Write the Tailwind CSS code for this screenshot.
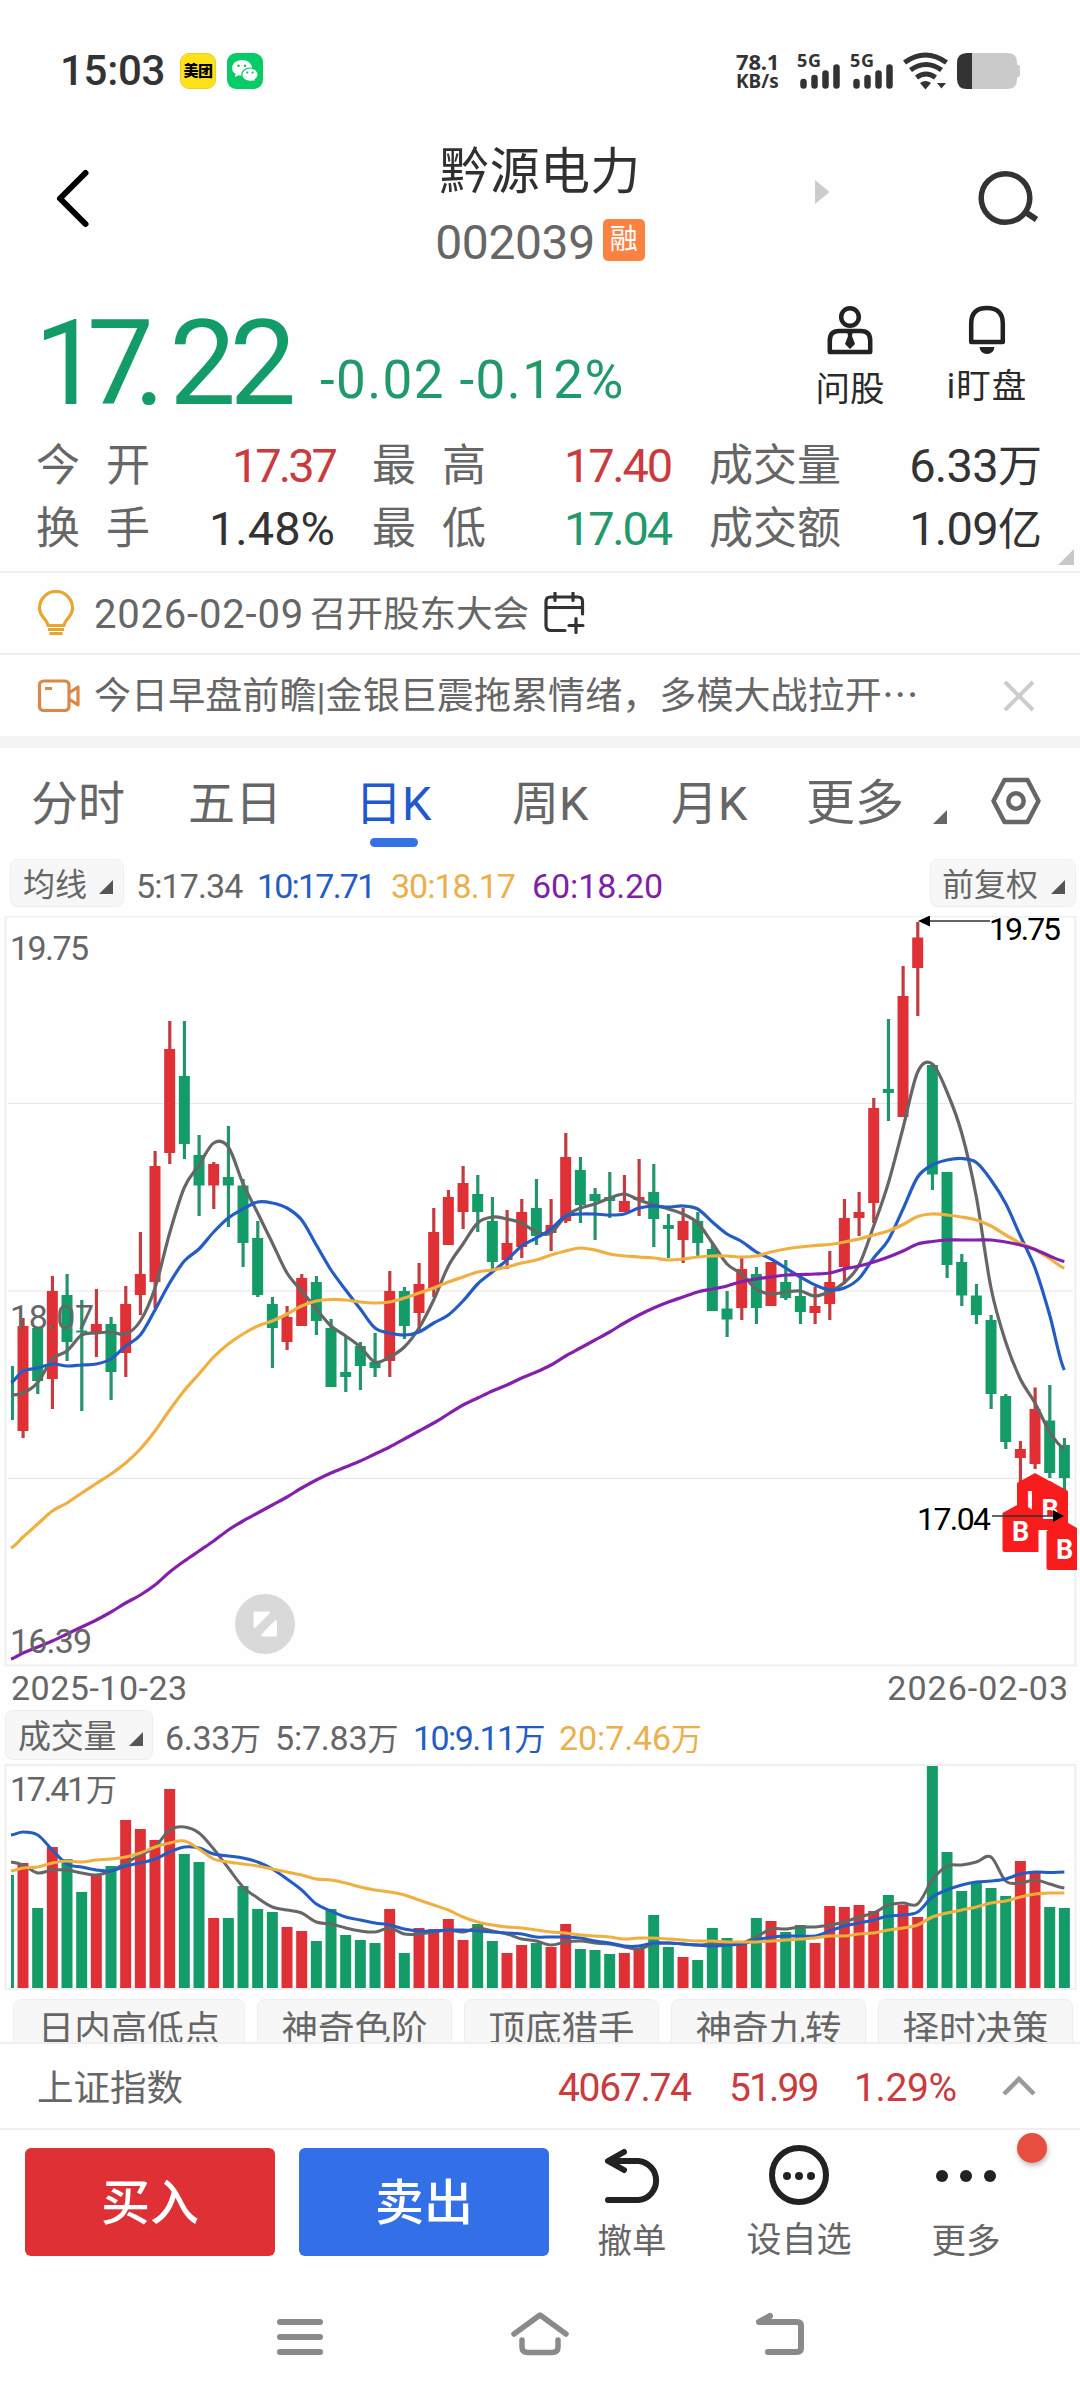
<!DOCTYPE html>
<html lang="zh-CN">
<head>
<meta charset="utf-8">
<title>黔源电力 002039</title>
<script src="https://cdn.jsdelivr.net/npm/@tailwindcss/browser@4"></script>
</head>
<body class="bg-[#fefefe]">
<div class="w-[1080px] h-[2400px] overflow-hidden flex flex-col bg-[#fefefe] text-[#333] whitespace-nowrap font-[Roboto,'Noto_Sans_CJK_SC',sans-serif]">

  <!-- status bar -->
  <div class="h-[142px] shrink-0 flex items-center pl-[60px] pr-[59px]">
    <div class="w-[120px] text-[42px] leading-[42px] font-medium tracking-[-0.3px] text-[#333]">15:03</div>
    <div class="size-[36px] rounded-[9px] bg-[#ffe11a] border border-[#e8cf2a] flex items-center justify-center text-[15px] leading-none font-black text-black tracking-[-0.5px]">美团</div>
    <div class="ml-[11px] size-[36px] rounded-[9px] bg-[#06cb67] flex items-center justify-center">
      <svg width="28" height="24" viewBox="0 0 28 24">
        <path d="M11 1C5.500 1 1 4.600 1 9c0 2.500 1.400 4.600 3.600 6L4 18l3.500-1.800c1.100.3 2.300.5 3.500.5 5.500 0 10-3.500 10-7.900S16.500 1 11 1z" fill="#fff"/>
        <path d="M19 9c-4.600 0-8.200 3-8.200 6.700s3.600 6.700 8.200 6.700c1 0 1.900-.1 2.700-.4L24.500 23l-.6-2.300c2-1.200 3.300-3 3.300-5C27.200 12 23.600 9 19 9z" fill="#fff" stroke="#06cb67" stroke-width="1.200"/>
        <g fill="#06cb67"><circle cx="7.500" cy="6.800" r="1.300"/><circle cx="14" cy="6.800" r="1.300"/><circle cx="16.300" cy="13.600" r="1.100"/><circle cx="21.600" cy="13.600" r="1.100"/></g>
      </svg>
    </div>
    <div class="ml-auto w-[60px] font-[Noto_Sans,sans-serif] font-bold text-[#333] leading-[22px]">
      <div class="text-[22px] tracking-[-0.2px]">78.1</div><div class="text-[19px] -mt-[2px]">KB/s</div>
    </div>
    <svg class="overflow-visible" width="225" height="38" viewBox="796 52 225 38">
      <g fill="#333" font-family="Noto Sans" font-weight="700" font-size="18">
        <text x="797" y="66.500" textLength="24">5G</text><text x="850" y="66.500" textLength="24">5G</text>
      </g>
      <g stroke="#333" stroke-width="6.500" stroke-linecap="round">
        <path d="M803.500 82v3.500M814.500 78v7.500M825.500 73.500V85.500M836.500 67.500V85.500M856.500 82v3.500M867.500 78v7.500M878.500 73.500V85.500M889.500 67.500V85.500"/>
      </g>
      <g fill="none" stroke="#333" stroke-width="5">
        <path d="M904.500 62.500q21-15 42 0M910.500 70q15.500-11 31 0M916.500 77.500q9.500-7 19 0"/>
      </g>
      <path d="M920 83q5.500-4 11 0l-5.500 6.500zM937 83h9l-4.500 5.500z" fill="#333"/>
      <path d="M966 53h41q10 0 10 9v2.500q3 0 3 3v7q0 3-3 3V80q0 9-10 9h-41z" fill="#cacaca"/>
      <path d="M972 53v36h-5q-10 0-10-10V63q0-10 10-10z" fill="#333"/>
    </svg>
  </div>

  <!-- title bar -->
  <header class="h-[148px] shrink-0 grid grid-cols-[340px_400px_340px]">
    <svg class="ml-[51px] mt-[24px]" width="44" height="66" viewBox="0 0 44 66"><path d="M34.500 7 9 32.500 34.500 58" fill="none" stroke="#000" stroke-width="6" stroke-linecap="round" stroke-linejoin="round"/></svg>
    <div class="flex flex-col items-center">
      <h1 class="mt-[3px] text-[50px] leading-[54px] tracking-[0.3px] text-[#303030]">黔源电力</h1>
      <div class="mt-[17px] flex items-center h-[54px] text-[#666]">
        <span class="text-[48px] leading-[54px] tracking-[-0.4px]">002039</span>
        <span class="ml-[8px] -mt-[6px] size-[42px] rounded-[5px] bg-[#fc8244] text-white text-[28px] leading-[42px] text-center">融</span>
      </div>
    </div>
    <div class="flex">
      <svg class="ml-[75px] mt-[38px]" width="15" height="24" viewBox="0 0 15 24"><path d="M0 0 14.500 12 0 24z" fill="#ccc"/></svg>
      <svg class="ml-[146px] mt-[26px]" width="66" height="62" viewBox="0 0 66 62"><circle cx="29.500" cy="30" r="24.300" fill="none" stroke="#333" stroke-width="5.500"/><path d="M50 44.500 60.500 51.500" stroke="#333" stroke-width="6"/></svg>
    </div>
  </header>

  <!-- quote -->
  <section class="h-[283px] shrink-0 border-b-2 border-[#efefef]">
    <div class="h-[144px] flex">
      <div class="w-[313px] pl-[34px] pt-[14px] text-[119px] leading-[120px] text-[#149c68]"><span class="tracking-[-14px]">1</span><span class="tracking-[-20px]">7</span><span class="tracking-[4px]">.</span><span class="tracking-[-6.5px]">22</span></div>
      <div class="w-[494px] pl-[7px] pt-[60px] text-[53px] leading-[60px] tracking-[1.4px] text-[#219a6b]">-0.02 -0.12%</div>
      <div class="w-[86px] flex flex-col items-center">
        <svg class="mt-[15px]" width="48" height="50" viewBox="0 0 48 50"><g fill="none" stroke="#222" stroke-width="4.500"><circle cx="24" cy="12" r="8.800"/><path d="M3.800 47V35.500Q3.800 26 13 26H35Q44.200 26 44.200 35.500V47Z" stroke-linejoin="round"/></g><path d="M21 26h6l-1 5 3 8-5 5-5-5 3-8z" fill="#222"/></svg>
        <div class="mt-[14px] text-[34.500px] leading-[40px] text-[#2a2a2a]">问股</div>
      </div>
      <div class="ml-[47px] w-[94px] flex flex-col items-center">
        <svg class="mt-[15px]" width="48" height="50" viewBox="0 0 48 50"><path d="M8.200 37V18.500Q8.200 3 24 3T39.800 18.500V37Z" fill="none" stroke="#222" stroke-width="4.500" stroke-linejoin="round"/><path d="M16.500 42h15q-1 7-7.500 7t-7.500-7z" fill="#222"/></svg>
        <div class="mt-[11px] text-[34.500px] leading-[40px] tracking-[1px] text-[#2a2a2a]">i盯盘</div>
      </div>
    </div>
    <div class="relative grid grid-cols-[111px_188px_149px_187px_172px_199px] pt-[1px] pl-[36px] text-[44px] leading-[62px] text-[#666]">
      <div>今<span class="inline-block w-[26px]"></span>开</div><div class="text-right text-[47px] tracking-[-3px] text-[#cb3a3c]">17.37</div>
      <div class="pl-[37px]">最<span class="inline-block w-[26px]"></span>高</div><div class="text-right text-[47px] tracking-[-2.200px] text-[#cb3a3c]">17.40</div>
      <div class="pl-[38px]">成交量</div><div class="text-right text-[#333]"><span class="text-[47px] tracking-[-0.700px]">6.33</span>万</div>
      <div>换<span class="inline-block w-[26px]"></span>手</div><div class="pl-[2px] text-right text-[47px] text-[#333]">1.48%</div>
      <div class="pl-[37px]">最<span class="inline-block w-[26px]"></span>低</div><div class="text-right text-[47px] tracking-[-2.200px] text-[#219a6b]">17.04</div>
      <div class="pl-[38px]">成交额</div><div class="text-right text-[#333]"><span class="text-[47px] tracking-[-0.700px]">1.09</span>亿</div>
      <svg class="absolute right-[6px] top-[115px]" width="16" height="16" viewBox="0 0 16 16"><path d="M16 0v16H0z" fill="#c8c8c8"/></svg>
    </div>
  </section>

  <!-- notices -->
  <div class="h-[82px] shrink-0 border-b-2 border-[#efefef] flex items-center pl-[36px] text-[#666]">
    <svg width="42" height="46" viewBox="0 0 42 46"><path d="M12 35.500C12 30 3.500 27 3.500 18a16.500 16.500 0 0 1 33 0C36.500 27 28 30 28 35.500z" fill="none" stroke="#e8a62c" stroke-width="3.200" stroke-linejoin="round"/><path d="M12 39.500h16M13.500 43.500h13" stroke="#e8a62c" stroke-width="3"/></svg>
    <div class="ml-[16px] pt-[3px] text-[40px] leading-[60px] tracking-[0.800px]">2026-02-09</div>
    <div class="ml-[6px] pt-[4px] text-[36.500px] leading-[60px]">召开股东大会</div>
    <svg class="ml-[15px]" width="42" height="42" viewBox="0 0 42 42"><path d="M38.500 22V9.500q0-4.500-4.500-4.500H6.500Q2 5 2 9.500v24q0 5 5 5H21M2 15.500H38.500M11 1v7.500M29 1v7.500M32 26.500v14M25 33.500h14" fill="none" stroke="#333" stroke-width="3.200" stroke-linecap="round"/></svg>
  </div>
  <div class="h-[81px] shrink-0 flex items-center pl-[37px] text-[#666]">
    <svg width="44" height="34" viewBox="0 0 44 34"><g fill="none" stroke="#db8748" stroke-width="3.200" stroke-linejoin="round"><rect x="2.500" y="2" width="29.500" height="29.500" rx="4"/><path d="m32 14 9-6v18l-9-6M8 9.500h7"/></g></svg>
    <div class="ml-[13px] pt-[3px] w-[908px] text-[37px] leading-[60px] tracking-[0.080px]">今日早盘前瞻|金银巨震拖累情绪，多模大战拉开⋯</div>
    <svg width="34" height="34" viewBox="0 0 34 34"><path d="M3 3 31 31M31 3 3 31" stroke="#ccc" stroke-width="4"/></svg>
  </div>
  <div class="h-[12px] shrink-0 bg-[#f4f4f4]"></div>

  <!-- period tabs -->
  <nav class="h-[111px] shrink-0 flex pl-[31px] pt-[26px] text-[47px] leading-[60px] text-[#666]">
    <div class="w-[157px]">分时</div>
    <div class="w-[167px]">五日</div>
    <div class="w-[157px] text-[#1f58cf]"><div>日K</div><div class="ml-[15px] mt-[4px] w-[48px] h-[9px] rounded-full bg-[#3670e5]"></div></div>
    <div class="w-[159px]">周K</div>
    <div class="w-[135px]">月K</div>
    <div class="w-[127px] text-[49px]">更多</div>
    <svg class="mt-[36px]" width="14" height="14" viewBox="0 0 14 14"><path d="M14 0v14H0z" fill="#666"/></svg>
    <svg class="ml-[43px] mt-[3px]" width="52" height="48" viewBox="0 0 52 48"><path d="M14.500 3H37.500L48.500 24 37.500 45H14.500L3.500 24Z" fill="none" stroke="#666" stroke-width="4.500" stroke-linejoin="round"/><circle cx="26" cy="24" r="7.700" fill="none" stroke="#666" stroke-width="4.500"/></svg>
  </nav>

  <!-- moving-average legend -->
  <div class="h-[57px] shrink-0 flex text-[34px] leading-[48px] text-[#666] pl-[10px]">
    <div class="w-[114px] h-[48px] rounded-[8px] bg-[#f7f7f7] border border-[#eee] flex items-center pl-[12px] text-[32px]"><span class="pt-[4px]">均线</span><svg class="ml-[12px] mt-[8px]" width="14" height="14" viewBox="0 0 14 14"><path d="M14 0v14H0z" fill="#555"/></svg></div>
    <div class="pl-[12px] w-[133px] pt-[3px] tracking-[-0.900px]">5:17.34</div>
    <div class="w-[134px] pt-[3px] tracking-[-1.800px] text-[#235dc4]">10:17.71</div>
    <div class="w-[141px] pt-[3px] tracking-[-1.000px] text-[#ecb04a]">30:18.17</div>
    <div class="pt-[3px] tracking-[-0.1px] text-[#7f1fa8]">60:18.20</div>
    <div class="ml-auto mr-[4px] w-[146px] h-[48px] rounded-[8px] bg-[#f7f7f7] border border-[#eee] flex items-center pl-[11px] text-[32px]"><span class="pt-[4px]">前复权</span><svg class="ml-[13px] mt-[8px]" width="14" height="14" viewBox="0 0 14 14"><path d="M14 0v14H0z" fill="#555"/></svg></div>
  </div>

  <!-- candlestick chart -->
  <svg class="block shrink-0" width="1080" height="751" viewBox="0 916 1080 751">
    <rect x="5.500" y="916.500" width="1070" height="749" fill="none" stroke="#efefef" stroke-width="2"/>
    <path d="M8 1103.500H1073M8 1291H1073M8 1478.500H1073" stroke="#e6e6e6" stroke-width="1.200"/>
    <g id="candles"></g>
    <g id="averages" fill="none" stroke-width="3.200"></g>
    <g font-size="34" fill="#666">
      <text x="10" y="959.500" textLength="79">19.75</text>
      <text x="10" y="1328.500" textLength="84">18.07</text>
      <text x="10" y="1653" textLength="82">16.39</text>
    </g>
    <g id="buys"></g>
    <g fill="#000" font-size="32">
      <text x="989" y="939.500" textLength="72">19.75</text>
      <text x="917" y="1530" textLength="74">17.04</text>
      <path d="M930 921H990M992 1516H1060" stroke="#333" stroke-width="1.600"/>
      <path d="M918 921 930 915.500V926.500zM1064 1516 1053 1510V1522z"/>
    </g>
    <circle cx="265" cy="1624" r="30" fill="#d9d9d9"/>
    <path d="M254 1612h14.500q2 0 .6 1.500L255.500 1627q-1.500 1.500-1.500-.5zM276.500 1636H262.500q-2 0-.6-1.500L275 1621q1.500-1.500 1.500.5z" fill="#fff" stroke="#fff" stroke-width="1"/>
  </svg>
  <div class="h-[43px] shrink-0 flex justify-between pl-[11px] pr-[11px] text-[34px] leading-[43px] text-[#666]"><span class="tracking-[0.500px]">2025-10-23</span><span class="tracking-[1.000px]">2026-02-03</span></div>

  <!-- volume legend -->
  <div class="h-[54px] shrink-0 flex pl-[5px] text-[34px] leading-[50px] text-[#666]">
    <div class="w-[148px] h-[50px] rounded-[8px] bg-[#f7f7f7] border border-[#eee] flex items-center pl-[12px] text-[33px] tracking-[-0.300px]"><span class="pt-[4px]">成交量</span><svg class="ml-[13px] mt-[8px]" width="14" height="14" viewBox="0 0 14 14"><path d="M14 0v14H0z" fill="#555"/></svg></div>
    <div class="pl-[12px] pt-[3px] w-[122px] tracking-[-0.300px]">6.33<span class="text-[31px]">万</span></div>
    <div class="w-[138px] pt-[3px] tracking-[-0.200px]">5:7.83<span class="text-[31px]">万</span></div>
    <div class="w-[146px] pt-[3px] tracking-[-1.600px] text-[#235dc4]">10:9.11<span class="text-[31px]">万</span></div>
    <div class="pt-[3px] tracking-[-0.100px] text-[#ecb04a]">20:7.46<span class="text-[31px]">万</span></div>
  </div>

  <!-- volume chart -->
  <svg class="block shrink-0" width="1080" height="228" viewBox="0 1764 1080 228">
    <rect x="5.500" y="1765" width="1070" height="224" fill="none" stroke="#efefef" stroke-width="2"/>
    <g id="volumes"></g>
    <g id="volumeAverages" fill="none" stroke-width="3"></g>
    <g fill="#666"><text x="10" y="1801" font-size="34" textLength="76">17.41</text><text x="86" y="1801" font-size="31">万</text></g>
  </svg>

  <!-- indicator chips, cut off by the index bar -->
  <div class="h-[50px] shrink-0 overflow-hidden flex gap-[12px] pl-[13px] pt-[7px] text-[36.500px] leading-[60px] text-[#666] text-center">
    <div class="w-[232px] h-[70px] shrink-0 rounded-[8px] bg-[#f7f7f7] border border-[#eee]">日内高低点</div>
    <div class="w-[195px] h-[70px] shrink-0 rounded-[8px] bg-[#f7f7f7] border border-[#eee]">神奇色阶</div>
    <div class="w-[195px] h-[70px] shrink-0 rounded-[8px] bg-[#f7f7f7] border border-[#eee]">顶底猎手</div>
    <div class="w-[195px] h-[70px] shrink-0 rounded-[8px] bg-[#f7f7f7] border border-[#eee]">神奇九转</div>
    <div class="w-[195px] h-[70px] shrink-0 rounded-[8px] bg-[#f7f7f7] border border-[#eee]">择时决策</div>
  </div>

  <!-- index bar -->
  <div class="h-[88px] shrink-0 border-y-2 border-[#efefef] flex items-center pl-[37px] text-[#cb3a3c] text-[39px] leading-[60px]">
    <div class="w-[521px] pt-[6px] text-[36.500px] text-[#666]">上证指数</div>
    <div class="w-[171px] pt-[4px] tracking-[-1.300px]">4067.74</div>
    <div class="w-[125px] pt-[4px] tracking-[-1.900px]">51.99</div>
    <div class="w-[147px] pt-[4px] tracking-[-0.4px]">1.29%</div>
    <svg width="36" height="22" viewBox="0 0 36 22"><path d="M3 19 18 4 33 19" fill="none" stroke="#999" stroke-width="4.500"/></svg>
  </div>

  <!-- actions -->
  <div class="relative h-[150px] shrink-0 flex pl-[25px] pt-[18px] text-[34px] leading-[40px] text-[#666]">
    <button class="w-[250px] h-[108px] rounded-[6px] bg-[#df3135] text-white text-[49px] leading-[112px] font-medium">买入</button>
    <button class="ml-[24px] w-[250px] h-[108px] rounded-[6px] bg-[#3370e7] text-white text-[49px] leading-[112px] font-medium">卖出</button>
    <div class="ml-[42px] w-[82px] flex flex-col items-center">
      <svg class="ml-[3px]" width="60" height="56" viewBox="604 2147 60 56"><path d="M608 2199H638.500A19.600 19.600 0 0 0 638.500 2160H609M624 2151 608 2160 624 2169" fill="none" stroke="#222" stroke-width="6" stroke-linecap="round" stroke-linejoin="round"/></svg>
      <div class="mt-[17px] text-[34.500px]">撤单</div>
    </div>
    <div class="ml-[66px] w-[120px] flex flex-col items-center -mt-[3px]">
      <svg width="60" height="60" viewBox="0 0 60 60"><circle cx="30" cy="30" r="27" fill="none" stroke="#222" stroke-width="6"/><g fill="#222"><circle cx="18" cy="31" r="4"/><circle cx="30" cy="31" r="4"/><circle cx="42" cy="31" r="4"/></g></svg>
      <div class="mt-[16px] text-[35px]">设自选</div>
    </div>
    <div class="ml-[62px] w-[90px] flex flex-col items-center">
      <svg width="60" height="56" viewBox="0 0 60 56"><g fill="#222"><circle cx="6" cy="28" r="6"/><circle cx="30" cy="28" r="6"/><circle cx="54" cy="28" r="6"/></g></svg>
      <div class="mt-[17px] text-[34.500px]">更多</div>
    </div>
    <div class="absolute left-[1017px] top-[3px] size-[30px] rounded-full bg-[#e84e40] shadow-[1px_3px_5px_rgba(0,0,0,0.25)]"></div>
  </div>

  <!-- system navigation -->
  <svg class="block shrink-0" width="1080" height="120" viewBox="0 2280 1080 120">
    <g fill="none" stroke="#8a8a8a" stroke-width="6" stroke-linecap="round" stroke-linejoin="round">
      <path d="M280 2322H320M280 2337H320M280 2352H320"/>
      <path stroke-width="5.500" d="M514 2334 540 2315 566 2334M522 2340V2347Q522 2352.500 528 2352.500H552Q558 2352.500 558 2347V2340"/>
      <path d="M770 2316 759 2322H797Q801 2322 801 2326V2348Q801 2352 797 2352H768"/>
    </g>
  </svg>
</div>

<script>
// One entry per trading day: [body top, body bottom, wick top, wick bottom, volume top, rising]
const days = [
[1366,1420,1366,1420,1875,0],[1326,1431,1318,1438,1863,1],[1328,1381,1328,1394,1908,0],[1291,1379,1276,1409,1847,1],[1295,1342,1274,1361,1859,0],
[1330.5,1332.5,1300,1411,1892,0],[1324,1333,1289,1357,1876,1],[1324,1372,1317,1400,1866,0],[1304,1353,1286,1377,1820,1],[1274,1295,1232,1315,1829,1],
[1166,1282,1151,1308,1840,1],[1049,1153,1021,1164,1789,1],[1076,1144,1021,1159,1854,0],[1155,1185.5,1135,1216,1862,0],[1164,1185.5,1162,1209,1918,1],
[1177,1185.5,1126,1227,1918,0],[1185.5,1243,1179,1267,1886,0],[1238,1295,1221,1297,1909,0],[1304,1328,1297,1368,1912,0],[1317,1342,1306,1350,1927,1],
[1278,1326,1274,1326,1931,1],[1282,1321,1276,1335,1941,0],[1328,1387,1319,1387,1909,0],[1372,1377,1337,1392,1935,0],[1346,1366,1342,1390,1940,0],
[1362,1368,1333,1377,1943,0],[1291,1361,1271,1377,1909,1],[1291,1326,1287,1339,1953,0],[1284,1313,1263,1330,1928,1],[1232,1289,1208,1297,1929,1],
[1197,1245,1190,1245,1919,1],[1183,1212,1166,1229,1940,1],[1194,1212,1175,1232,1924,0],[1221,1262,1197,1270,1941,0],[1243,1260,1210,1269,1953,1],
[1212,1247,1199,1258,1945,1],[1208,1236,1179,1245,1943,0],[1225,1233,1199,1251,1947,1],[1157,1221,1133,1223,1924,1],[1170,1205,1157,1223,1949,0],
[1194,1201,1188,1240,1950,0],[1197,1201,1172,1218,1954,0],[1201,1212,1175,1212,1953,1],[1197,1200,1159,1216,1949,1],[1192,1219,1164,1247,1915,0],
[1225,1229,1214,1258,1947,0],[1221,1240,1208,1263,1957,1],[1221,1243,1212,1256,1960,0],[1249,1311,1243,1311,1928,0],[1308.5,1319.5,1291,1337,1938,0],
[1269,1308,1258,1320,1943,1],[1274,1308,1267,1324,1918,0],[1262,1306,1262,1306,1921,1],[1282,1298,1260,1300,1932,0],[1296,1312,1274,1324,1925,0],
[1306,1313,1287,1324,1943,1],[1282,1304,1251,1320,1906,1],[1218,1267,1199,1284,1907,1],[1212,1218,1192,1236,1905,1],[1108,1203,1098,1223,1911,1],
[1089,1093,1019,1121,1895,0],[996,1117,966,1117,1905,1],[937.5,968,922,1016,1917,1],[1065,1174.5,1065,1190,1766,0],[1172,1265,1172,1278,1852,0],
[1262,1295.5,1254,1306,1891,0],[1295.5,1315,1284,1324,1882,0],[1320,1394,1315,1409,1888,0],[1396,1442,1394,1449,1896,0],[1449,1458,1441,1485,1861,1],
[1409,1464,1387.5,1469,1873,1],[1420.5,1473,1385,1478,1907,0],[1445,1478,1438,1512,1908,0]];
const priceLines = {
"#666666":[1395,1393,1382.5,1359,1351,1335,1333,1332,1334,1321,1288,1233,1187.5,1165,1143,1147,1183.5,1213,1243,1273,1291,1309,1326,1336,1347,1362,1357,1347,1328,1300,1266,1244,1223,1217,1219,1223,1232,1233,1216,1208,1204,1198,1194,1200,1205,1209,1214,1223,1243,1264,1274,1289,1294,1292,1291,1296,1291.5,1282.5,1265,1226,1183,1128,1072,1064,1092,1133,1197,1288,1342,1379,1403,1432,1449],
"#235dc4":[1382.5,1371,1368,1364,1366,1365,1364,1359,1346,1335,1310,1283,1261,1249,1232,1218,1209,1202,1203,1208,1220,1245,1270,1290,1309,1328,1333,1335,1332,1323,1315,1301,1284,1272,1260,1246,1238,1229,1216,1214,1214,1215,1214,1208,1206,1207,1206,1209,1222,1234,1241.5,1252,1259,1268,1277,1285,1290,1288,1278.5,1258,1240,1209,1177,1165,1160,1158.5,1162.5,1180,1203.5,1236,1268,1315,1370],
"#f0b040":[1548,1537,1524,1511,1503,1493,1483.5,1474,1463,1449,1431,1410,1390.5,1374,1357,1344,1334,1326,1321,1314,1306,1301,1299.5,1300,1302,1303,1302,1298,1293,1288,1282,1277,1272,1270,1267,1263,1260,1255,1251,1248,1250,1254,1256,1257,1258,1260,1259,1257,1256,1256,1257,1256,1252,1249,1247,1245.5,1244.5,1242,1239,1235,1231,1224.5,1216.5,1214,1215,1217,1220,1226,1235,1243,1249.5,1258.5,1268],
"#8321ad":[1659,1653,1647,1641,1634,1627,1620,1612,1603,1595,1585,1572,1561,1551,1541,1530,1521,1513,1505,1497,1488,1480,1473,1467,1461,1454,1447,1439,1431,1423,1414,1405,1398,1391,1385,1378,1372,1365,1356,1348,1340,1332,1323,1315,1308,1302,1297,1292,1289,1286,1281.5,1279,1277,1275,1274.5,1274,1273,1269,1266,1262,1257,1251,1244,1241.5,1240,1240,1240,1240,1242,1245,1249.5,1256,1261.5]};
const volumeLines = {
"#666666":[1862,1865,1873,1870,1870,1873,1875,1871,1863,1855,1847,1830,1827,1833,1849,1868,1887,1898,1907,1910,1913,1922,1924,1928,1931,1932,1928,1934,1934,1932,1930,1932,1928,1931,1934,1939,1941,1945,1942,1941,1943,1944,1947,1949,1944,1943,1944,1945,1944,1944,1943,1937,1929,1929,1927,1927,1925,1922,1917,1913,1905,1903,1904,1880,1866,1865,1862,1857,1881,1883,1880,1884,1888],
"#235dc4":[1835,1832,1835,1850,1864,1867,1870,1871,1866,1863,1859,1852,1847,1848,1854,1856,1858,1862,1869,1879,1890,1904,1911,1917,1920,1923,1925,1929,1931,1931,1930,1930,1931,1932,1933,1934,1937,1937,1937,1938,1941,1943,1946,1946,1943,1943,1944,1945,1946,1945,1944,1940,1937,1936,1936,1936,1931,1926,1923,1920,1916,1915,1912,1897,1890,1885,1882,1881,1879,1874,1872,1872.5,1872],
"#f0b040":[1871,1868,1867,1863,1861,1862,1860,1859,1857,1853,1847,1843,1841,1849,1859,1862,1864,1866,1869,1872,1875,1879,1880,1883,1887,1890,1892,1895,1900,1905,1910,1917,1922,1925,1927,1928,1930,1932,1933,1935,1936,1937,1939,1938,1938,1939,1940,1941,1941,1942,1942,1942,1941,1940,1939,1938,1936,1936,1934,1933,1930,1928,1925,1917,1913,1910,1907,1903,1901,1897,1894,1893,1893]};
const xAt = i => i === 0 ? 11 : 23 + 14.667 * (i - 1);
const colour = up => up ? "#df3135" : "#149c68";
let bodies = "", bars = "";
days.forEach(([top, bottom, high, low, volume, up], i) => {
  const x = xAt(i), left = i ? x - 5.5 : 11, width = i ? 11 : 3;
  if (i) bodies += `<rect x="${x - 1.5}" y="${high}" width="3.200" height="${low - high}" fill="${up ? "#c43c40" : "#26946a"}"/>`;
  bodies += `<rect x="${left}" y="${top}" width="${width}" height="${bottom - top}" fill="${colour(up)}"/>`;
  bars += `<rect x="${left}" y="${volume}" width="${width}" height="${1988 - volume}" fill="${colour(up)}"/>`;
});
document.getElementById("candles").innerHTML = bodies;
document.getElementById("volumes").innerHTML = bars;
function curve(ys) {
  let d = `M${xAt(0)} ${ys[0]}`;
  for (let i = 0; i < ys.length - 1; i++) {
    const a = ys[Math.max(i - 1, 0)], b = ys[i], c = ys[i + 1], e = ys[Math.min(i + 2, ys.length - 1)];
    const step = (xAt(i + 1) - xAt(i)) / 3;
    d += `C${xAt(i) + step} ${b + (c - a) / 6} ${xAt(i + 1) - step} ${c - (e - b) / 6} ${xAt(i + 1)} ${c}`;
  }
  return d;
}
const draw = lines => Object.entries(lines).map(([c, ys]) => `<path d="${curve(ys)}" stroke="${c}"/>`).join("");
document.getElementById("averages").innerHTML = draw(priceLines);
document.getElementById("volumeAverages").innerHTML = draw(volumeLines);
// Buy markers: [centre x, apex y]
document.getElementById("buys").innerHTML = [[1035, 1473], [1020.5, 1503], [1050, 1481], [1064.5, 1521]].map(([x, y]) => {
  const r = Math.min(x + 18, 1077);
  return `<path d="M${x} ${y}L${r} ${y + (r - x) * 0.55}V${y + 49}H${x - 16}q-2 0-2-2V${y + 10}z" fill="#f91c1c"/><text x="${x}" y="${y + 38}" font-size="27" font-weight="700" fill="#fff" text-anchor="middle">B</text>`;
}).join("");
</script>
</body>
</html>
